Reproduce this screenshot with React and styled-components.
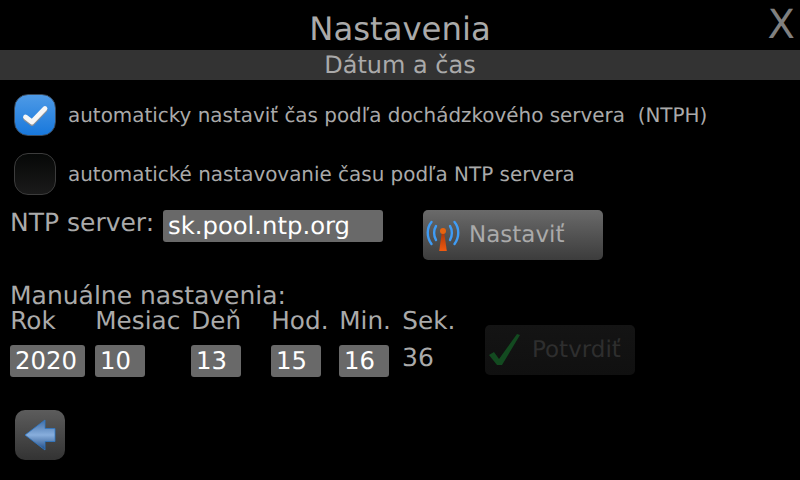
import React from "react";
import styled, { createGlobalStyle } from "styled-components";

const GlobalStyle = createGlobalStyle`
  html, body {
    margin: 0;
    padding: 0;
    background: #000;
  }
  * {
    box-sizing: border-box;
  }
`;

const Page = styled.div`
  position: relative;
  width: 800px;
  height: 480px;
  overflow: hidden;
  display: flex;
  flex-direction: column;
  background: #000;
  color: #aaa;
  font-family: "DejaVu Sans", sans-serif;
  text-rendering: geometricPrecision;
`;

const Title = styled.div`
  height: 50px;
  padding-top: 8px;
  font-size: 32.3px;
  line-height: 42px;
  text-align: center;
  color: #aaa;
`;

const Close = styled.div`
  position: absolute;
  top: 2px;
  right: 5px;
  font-size: 40px;
  line-height: 46px;
  color: #808080;
`;

const SubTitle = styled.div`
  height: 30px;
  background: #333;
  font-size: 24px;
  line-height: 30px;
  text-align: center;
  color: #aaa;
`;

const CheckRow = styled.div`
  display: flex;
  align-items: center;
  gap: 12px;
  height: 42px;
  padding-left: 14px;
  margin-top: ${(p) => p.$top}px;
  font-size: 19.93px;
`;

const CheckBox = styled.div`
  width: 42px;
  height: 42px;
  flex: none;
  border-radius: 14px;
  display: flex;
  align-items: center;
  justify-content: center;
  border: 1px solid ${(p) => (p.$checked ? "#3a4a5c" : "#3c3c3c")};
  background: ${(p) =>
    p.$checked ? "linear-gradient(#4e9ae6, #1878dc)" : "linear-gradient(#060807, #1a1a1a)"};
`;

const NtpRow = styled.div`
  display: flex;
  align-items: flex-start;
  margin-top: 15px;
  padding-left: 10px;
`;

const NtpLabel = styled.div`
  width: 153px;
  font-size: 25px;
  line-height: 26px;
`;

const Field = styled.div`
  width: ${(p) => p.$w}px;
  height: 32px;
  flex: none;
  padding-left: ${(p) => p.$pad}px;
  border-radius: 3px;
  background: #696969;
  color: #fff;
  font-size: 24.3px;
  line-height: 31px;
`;

const Button = styled.div`
  height: 50px;
  width: ${(p) => p.$w}px;
  flex: none;
  display: flex;
  align-items: center;
  border-radius: 5px;
  font-size: 23px;
  background: ${(p) =>
    p.$disabled ? "linear-gradient(#141414, #101010)" : "linear-gradient(#6a6a6a, #3c3c3c)"};
  color: ${(p) => (p.$disabled ? "#2e2e2e" : "#aaa")};
`;

const NtpButton = styled(Button)`
  margin-left: 40px;
  gap: 9px;
  padding-left: 3px;
`;

const ManualTitle = styled.div`
  margin-top: 23px;
  height: 25px;
  padding-left: 10px;
  font-size: 25px;
  line-height: 26px;
`;

const ManualRow = styled.div`
  display: flex;
  align-items: flex-start;
`;

const DateGrid = styled.div`
  display: grid;
  grid-template-columns: 85px 96px 80px 68px 63px 60px;
  grid-template-rows: 26px 32px;
  row-gap: 11px;
  padding-left: 10px;
`;

const ColLabel = styled.div`
  font-size: 24.7px;
  line-height: 26px;
  padding-left: 0.3px;
  white-space: nowrap;
`;

const Seconds = styled.div`
  font-size: 25px;
  line-height: 26px;
`;

const ConfirmButton = styled(Button)`
  margin-top: 17px;
  margin-left: 23px;
  gap: 11px;
  padding-left: 3px;
`;

const BackButton = styled.div`
  width: 50px;
  height: 50px;
  margin: 33px 0 0 15px;
  border-radius: 10px;
  display: flex;
  align-items: center;
  justify-content: center;
  background: linear-gradient(#5c5c5c, #333);
`;

const CheckMark = () => (
  <svg width="30" height="26" viewBox="0 0 30 26">
    <path d="M5.5 15 L12 20 L25 6.5" fill="none" stroke="#8a8f96" strokeWidth="4.8" strokeLinecap="round" strokeLinejoin="round" transform="translate(0 1.5)" />
    <path d="M5.5 15 L12 20 L25 6.5" fill="none" stroke="#f6f6f6" strokeWidth="4.8" strokeLinecap="round" strokeLinejoin="round" />
  </svg>
);

const AntennaIcon = () => (
  <svg width="34" height="36" viewBox="0 0 34 36">
    <defs>
      <linearGradient id="mast" x1="0" y1="0" x2="0" y2="1">
        <stop offset="0" stopColor="#a83408" />
        <stop offset="1" stopColor="#f05a10" />
      </linearGradient>
    </defs>
    <g fill="none" stroke="#3f9cf5" strokeWidth="2.4" strokeLinecap="round">
      <path d="M5.5 5 C0.5 11 0.5 20 5.5 27" />
      <path d="M10 9 C7.5 13 7.5 19 10 23" />
      <path d="M28.5 5 C33.5 11 33.5 20 28.5 27" />
      <path d="M24 9 C26.5 13 26.5 19 24 23" />
    </g>
    <path d="M16 14 H18 L20.8 34 H13.2 Z" fill="url(#mast)" />
    <circle cx="17" cy="14" r="3" fill="#e8640f" />
  </svg>
);

const ConfirmIcon = () => (
  <svg width="33" height="34" viewBox="0 0 33 34">
    <path d="M1 22 L6 19 L11 26 L29 1 L32 2 L14 32 L9 32 Z" fill="#134a20" />
  </svg>
);

const ArrowIcon = () => (
  <svg width="32" height="32" viewBox="0 0 32 32">
    <defs>
      <linearGradient id="arrow" x1="0" y1="0" x2="0" y2="1">
        <stop offset="0" stopColor="#3f6ea8" />
        <stop offset="0.5" stopColor="#88aedc" />
        <stop offset="1" stopColor="#1e4a84" />
      </linearGradient>
    </defs>
    <path d="M1 16 L21 1 L21 9.5 L31 9.5 L31 22.5 L21 22.5 L21 31 Z" fill="url(#arrow)" stroke="#2f78c8" strokeWidth="0.8" />
  </svg>
);

const dateColumns = [
  { label: "Rok", value: "2020", w: 75 },
  { label: "Mesiac", value: "10", w: 50 },
  { label: "Deň", value: "13", w: 50 },
  { label: "Hod.", value: "15", w: 50 },
  { label: "Min.", value: "16", w: 50 },
];

const App = () => (
  <Page>
    <GlobalStyle />
    <Title>Nastavenia</Title>
    <Close>X</Close>
    <SubTitle>Dátum a čas</SubTitle>

    <CheckRow $top={14}>
      <CheckBox $checked>
        <CheckMark />
      </CheckBox>
      automaticky nastaviť čas podľa dochádzkového servera&nbsp; (NTPH)
    </CheckRow>
    <CheckRow $top={17}>
      <CheckBox />
      automatické nastavovanie času podľa NTP servera
    </CheckRow>

    <NtpRow>
      <NtpLabel>NTP server:</NtpLabel>
      <Field $w={220} $pad={5}>sk.pool.ntp.org</Field>
      <NtpButton $w={180}>
        <AntennaIcon />
        Nastaviť
      </NtpButton>
    </NtpRow>

    <ManualTitle>Manuálne nastavenia:</ManualTitle>
    <ManualRow>
      <DateGrid>
        {dateColumns.map((c) => (
          <ColLabel key={c.label}>{c.label}</ColLabel>
        ))}
        <ColLabel>Sek.</ColLabel>
        {dateColumns.map((c) => (
          <div key={c.label}>
            <Field $w={c.w} $pad={5}>{c.value}</Field>
          </div>
        ))}
        <Seconds>36</Seconds>
      </DateGrid>
      <ConfirmButton $w={150} $disabled>
        <ConfirmIcon />
        Potvrdiť
      </ConfirmButton>
    </ManualRow>

    <BackButton>
      <ArrowIcon />
    </BackButton>
  </Page>
);

export default App;
